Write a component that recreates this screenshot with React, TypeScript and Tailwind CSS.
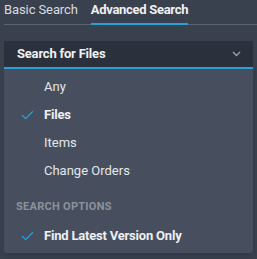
import { Check } from "lucide-react";

const types = [
  { label: "Any", selected: false },
  { label: "Files", selected: true },
  { label: "Items", selected: false },
  { label: "Change Orders", selected: false },
];

function MenuRow({ label, selected }: { label: string; selected: boolean }) {
  return (
    <div className="flex items-center h-7">
      <div className="w-[40px] flex justify-center pl-[7px]">
        {selected && <Check className="h-[15px] w-[15px] text-[#2a9fd8]" strokeWidth={2} />}
      </div>
      <span className={selected ? "font-bold text-[#eef0f3] tracking-[-0.2px]" : "text-[#e3e6ea]"}>{label}</span>
    </div>
  );
}

export default function App() {
  return (
    <div
      className="w-[257px] h-[259px] bg-[#3a414e] text-[13px] overflow-hidden"
      style={{ fontFamily: 'Roboto, "Liberation Sans", sans-serif' }}
    >
      {/* tabs */}
      <div className="flex ml-[4px] h-[25px] border-b border-[#5a6170] items-end">
        <div className="pb-[5px] text-[#d8dbe0] pr-[13px] tracking-[-0.1px]">Basic Search</div>
        <div className="pb-[4px] -mb-px font-bold text-[#eef0f3] border-b-2 border-[#2a9fd8] tracking-[-0.3px]">
          Advanced Search
        </div>
      </div>

      {/* dropdown */}
      <div className="mx-[4px] mt-[16px]">
        <div className="flex items-center justify-between h-[28px] bg-[#2a313c] border-b-2 border-[#2a9fd8] pl-[13px] pr-[12px]">
          <span className="font-bold text-[#eef0f3] tracking-[-0.2px]">Search for Files</span>
          <svg width="9" height="6" viewBox="0 0 9 6" fill="none">
            <path d="M1 1l3.5 3.5L8 1" stroke="#9aa0aa" strokeWidth="1.4" />
          </svg>
        </div>
        <div className="bg-[#474f5f] rounded-b-[3px] pt-[4px] pb-[3px] shadow-md">
          {types.map((t) => (
            <MenuRow key={t.label} label={t.label} selected={t.selected} />
          ))}
          <div className="mt-[12px] pl-[12px] text-[11px] font-bold tracking-wide text-[#8c929c] uppercase h-[20px] flex items-center">
            Search Options
          </div>
          <div className="mt-[5px]">
            <MenuRow label="Find Latest Version Only" selected={true} />
          </div>
        </div>
      </div>
    </div>
  );
}
